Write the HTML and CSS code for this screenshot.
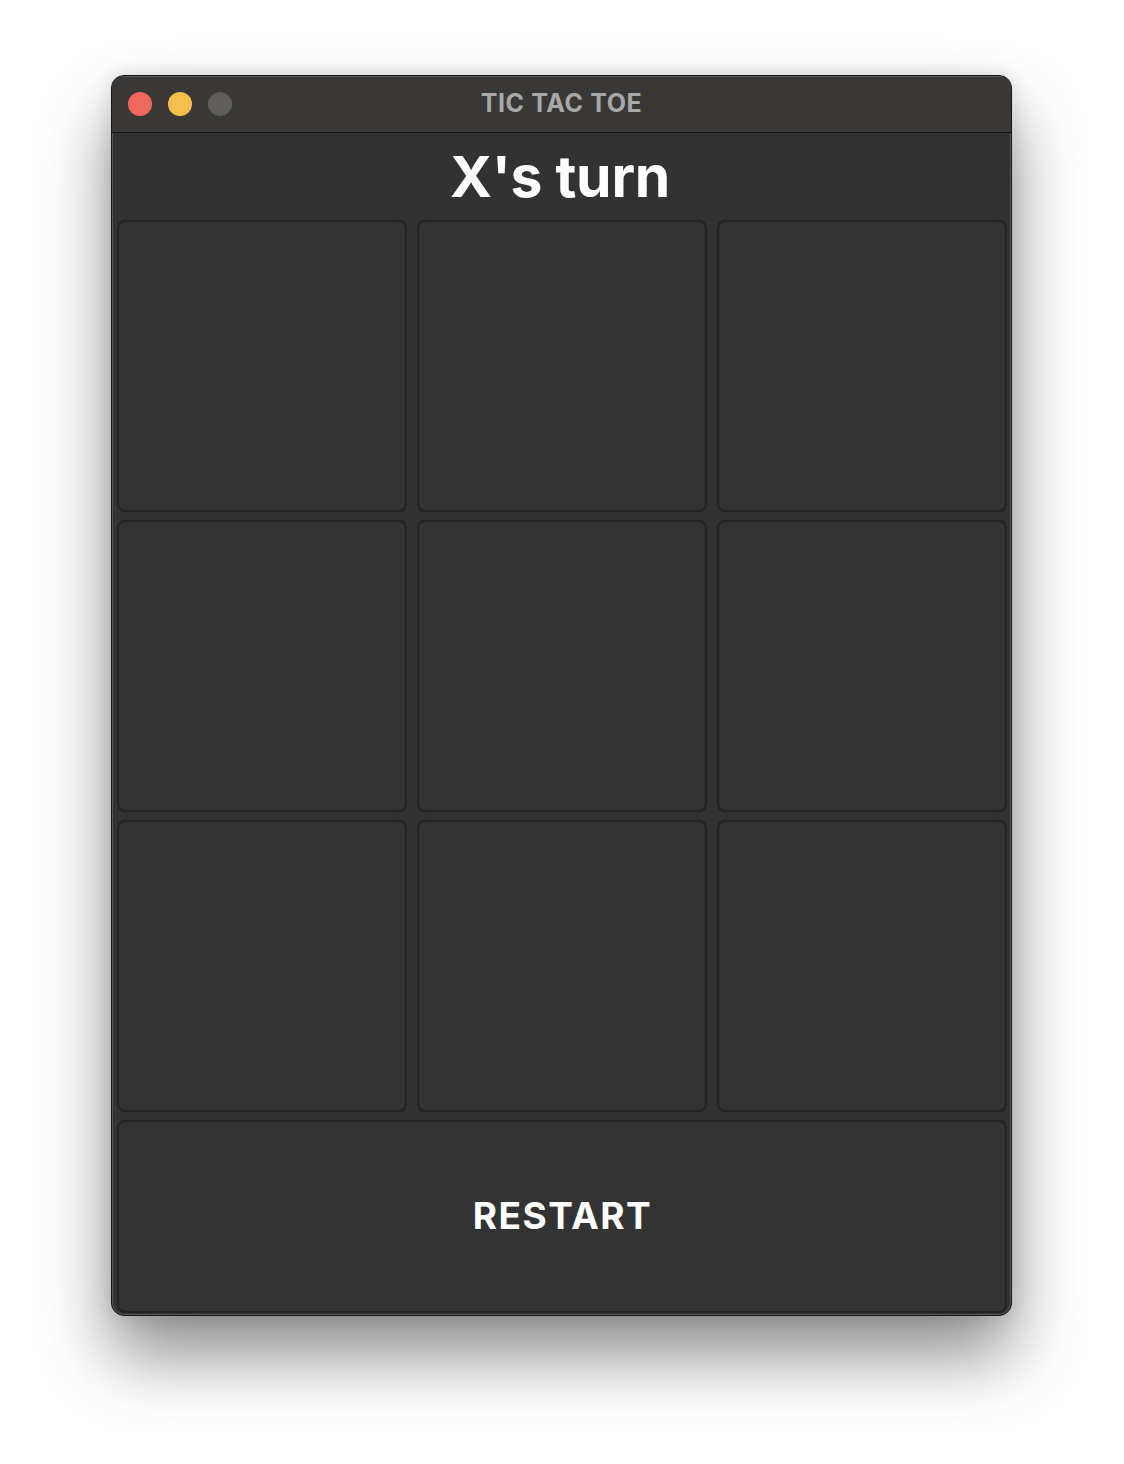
FILE: index.html
```html
<!DOCTYPE html>
<html>
<head>
<meta charset="utf-8">
<link rel="stylesheet" href="styles.css">
</head>
<body>
<div class="window">
  <div class="titlebar">
    <div class="lights">
      <span class="light red"></span>
      <span class="light yellow"></span>
      <span class="light grey"></span>
    </div>
    <div class="title">TIC TAC TOE</div>
  </div>
  <div class="content">
    <h1 class="status">X's turn</h1>
    <div class="board">
      <div class="cell"></div><div class="cell"></div><div class="cell"></div>
      <div class="cell"></div><div class="cell"></div><div class="cell"></div>
      <div class="cell"></div><div class="cell"></div><div class="cell"></div>
    </div>
    <button class="restart">RESTART</button>
  </div>
</div>
</body>
</html>
```
FILE: styles.css
```css
html, body {
  margin: 0;
  background: #ffffff;
}
body {
  padding: 75px 0 0 111px;
  height: 1464px;
  box-sizing: border-box;
  font-family: Inter, "Noto Sans", sans-serif;
}
.window {
  width: 901px;
  height: 1241px;
  box-sizing: border-box;
  border: 1px solid #151515;
  border-radius: 13px;
  background: #323232;
  box-shadow: inset 0 0 0 1px rgba(255,255,255,0.18), 0 40px 70px rgba(0,0,0,0.45), 0 0 20px rgba(0,0,0,0.12);
  overflow: hidden;
  display: flex;
  flex-direction: column;
}
.titlebar {
  height: 56px;
  flex: none;
  background: #393837;
  border-bottom: 1px solid #121212;
  display: flex;
  align-items: center;
  position: relative;
  box-shadow: inset 0 1px 0 rgba(255,255,255,0.18);
}
.lights {
  display: flex;
  gap: 16px;
  padding-left: 16px;
  position: relative;
  z-index: 1;
}
.light {
  width: 24px;
  height: 24px;
  border-radius: 50%;
  display: block;
}
.red { background: #ee6a5f; }
.yellow { background: #f5bf4f; }
.grey { background: #5f5e5d; }
.title {
  position: absolute;
  left: 0;
  right: 0;
  top: 0;
  bottom: 0;
  display: flex;
  align-items: center;
  justify-content: center;
  padding-bottom: 2px;
  color: #a8a8a8;
  font-weight: 700;
  font-size: 25px;
  letter-spacing: 0.6px;
}
.content {
  flex: 1;
  display: flex;
  flex-direction: column;
  padding: 0 4px 2px 5px;
}
.status {
  margin: 0;
  height: 87px;
  display: flex;
  align-items: center;
  justify-content: center;
  color: #ffffff;
  font-size: 57px;
  font-weight: 700;
  letter-spacing: -0.2px;
  padding-right: 4px;
}
.board {
  display: grid;
  grid-template-columns: repeat(3, 1fr);
  grid-template-rows: repeat(3, 292px);
  column-gap: 10px;
  row-gap: 8px;
}
.cell {
  background: #333333;
  border: 2px solid #242424;
  border-radius: 8px;
}
.restart {
  margin-top: 8px;
  flex: 1;
  background: #333333;
  border: 2px solid #242424;
  border-radius: 8px;
  color: #ffffff;
  font-family: Inter, "Noto Sans", sans-serif;
  font-size: 37px;
  font-weight: 700;
  letter-spacing: 1.5px;
  padding: 0 0 2px 1px;
}
```
